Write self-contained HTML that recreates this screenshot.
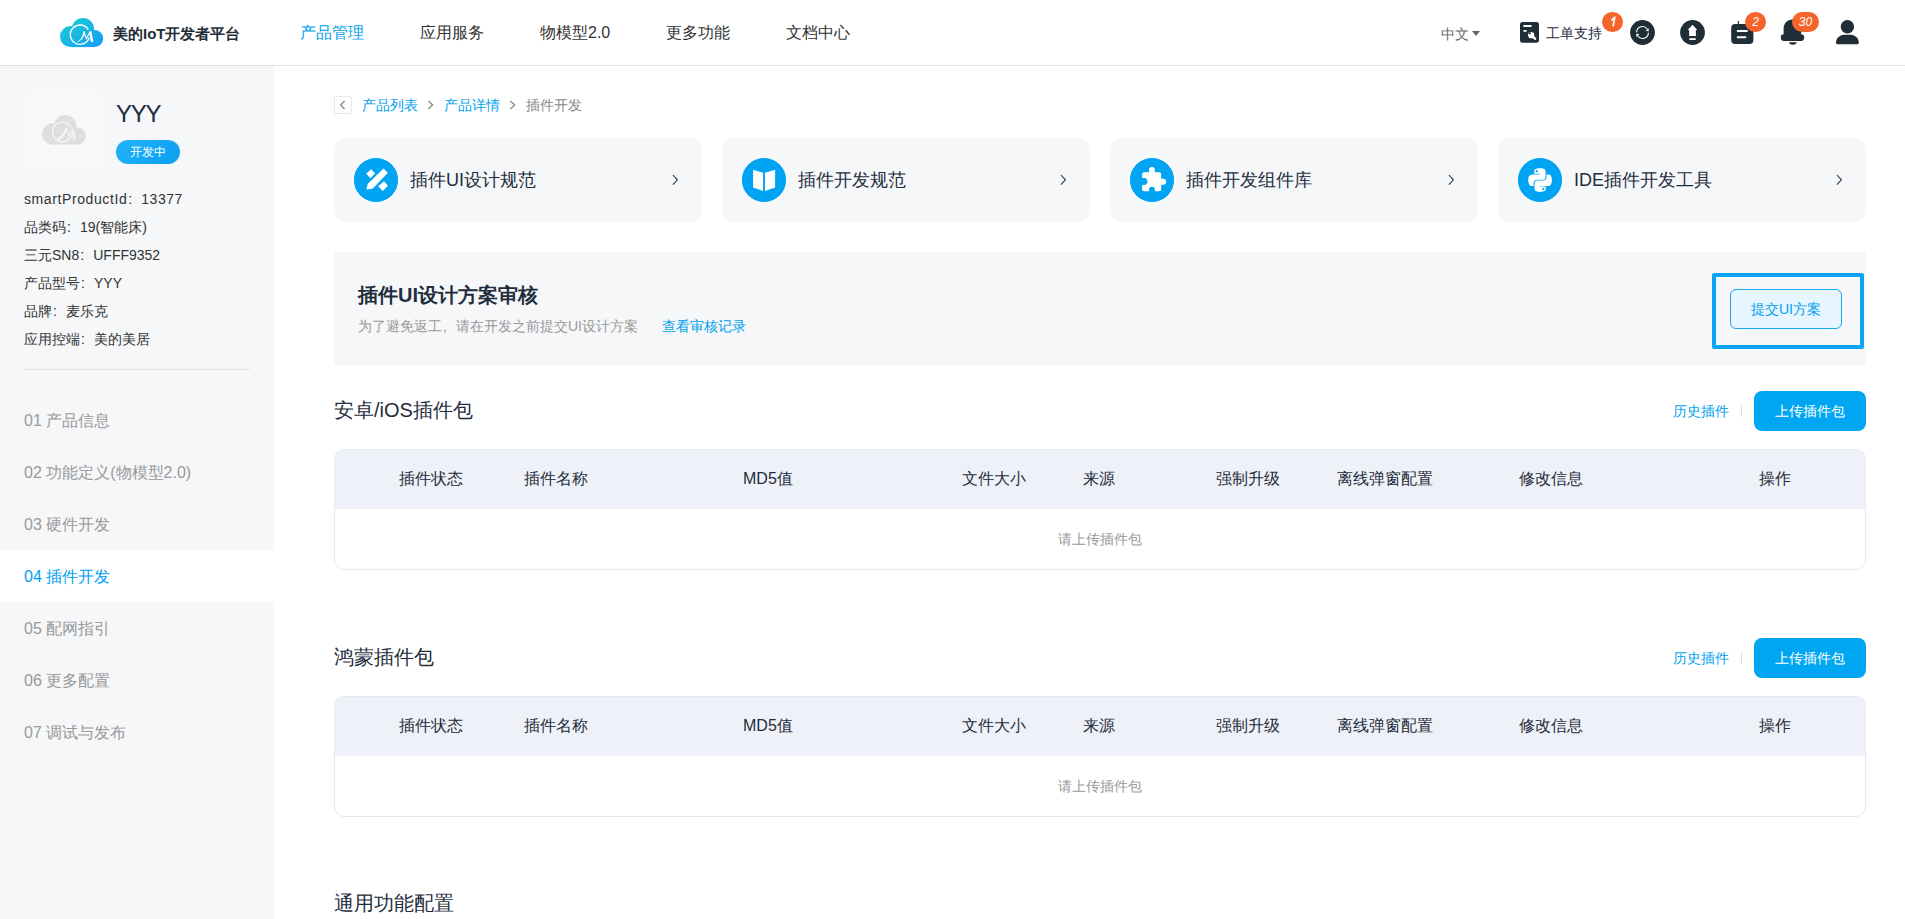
<!DOCTYPE html>
<html><head><meta charset="utf-8">
<style>
*{margin:0;padding:0;box-sizing:border-box}
html,body{width:1905px;height:919px;overflow:hidden;background:#fff;font-family:"Liberation Sans",sans-serif;color:#1f2d3d}
.abs{position:absolute}
.fc{display:inline-block;width:14px;padding-left:1px}
.badge{position:absolute;top:12px;height:20px;border-radius:10px;background:#f5642b;color:#fff;font-size:12px;line-height:20px;text-align:center;font-style:italic}
#hdr{position:absolute;left:0;top:0;width:1905px;height:66px;background:#fff;border-bottom:1px solid #dfe1e6}
.nav{position:absolute;top:22px;font-size:16px;line-height:22px;color:#333;white-space:nowrap}
#side{position:absolute;left:0;top:66px;width:274px;height:853px;background:#f5f7f9}
.info{position:absolute;left:24px;font-size:14px;line-height:20px;color:#333;white-space:nowrap}
.menu{position:absolute;left:0;width:274px;height:52px;font-size:16px;line-height:54px;padding-left:24px;color:#999;white-space:nowrap}
.menu.act{background:#fff;color:#00a1ee}
.card{position:absolute;top:138px;width:368px;height:84px;background:#f5f7f9;border-radius:10px}
.card .ic{position:absolute;left:20px;top:20px;width:44px;height:44px;border-radius:50%;background:#00a6f2}
.card .tx{position:absolute;left:76px;top:30px;font-size:18px;line-height:24px;color:#1f2d3d;white-space:nowrap}
.card .chev{position:absolute;right:22px;top:35px;width:14px;height:14px}
.sec-title{position:absolute;left:334px;font-size:20px;line-height:26px;color:#1f2d3d;white-space:nowrap}
.link{position:absolute;font-size:14px;line-height:18px;color:#00a1ee;white-space:nowrap}
.btn{position:absolute;width:112px;height:40px;border-radius:8px;background:#00a6f2;color:#fff;font-size:14px;line-height:40px;text-align:center}
.tbl{position:absolute;left:334px;width:1532px;height:121px;border:1px solid #e6e9f0;border-radius:10px;overflow:hidden;background:#fff}
.tbl .th{position:absolute;left:0;top:0;width:100%;height:59px;background:#eef1f7}
.tbl .h{position:absolute;top:18px;font-size:16px;line-height:22px;color:#1f2d3d;white-space:nowrap}
.tbl .empty{position:absolute;left:0;width:100%;top:80px;text-align:center;font-size:14px;line-height:18px;color:#999}
</style></head><body>
<div id="hdr">
  <svg class="abs" style="left:60px;top:18px" width="43.5" height="29.5" viewBox="0 0 43.5 29.5">
    <defs><linearGradient id="lg1" gradientUnits="userSpaceOnUse" x1="10" y1="0" x2="30" y2="29"><stop offset="0" stop-color="#19cdd2"/><stop offset="1" stop-color="#14a3f5"/></linearGradient></defs>
    <g fill="url(#lg1)"><circle cx="10.5" cy="18.6" r="10.5"/><circle cx="22.9" cy="11.2" r="11.2"/><circle cx="34.7" cy="20.6" r="8.5"/><rect x="10.5" y="15" width="24.2" height="14.1"/></g>
    <path d="M28.3 11.6 A9.7 9.7 0 1 0 29.3 19.5" fill="none" stroke="#fff" stroke-width="1.4"/>
    <path d="M16.4 24.2 C20.5 22.8 22.8 18 23.6 13.6 L25.2 13.6 C24.6 18.5 21.5 23.6 16.4 24.2 Z" fill="#fff"/>
    <path d="M23.9 13.6 L26.4 20.6 L30.2 13.6" fill="none" stroke="#fff" stroke-width="1.1"/>
    <path d="M30.2 13.6 L32.2 24" fill="none" stroke="#fff" stroke-width="2.4"/>
  </svg>
  <div class="abs" style="left:113px;top:24px;font-size:15px;line-height:20px;font-weight:bold;color:#1f2d37">美的IoT开发者平台</div>
  <div class="nav" style="left:300px;color:#00a1ee">产品管理</div>
  <div class="nav" style="left:420px">应用服务</div>
  <div class="nav" style="left:540px">物模型2.0</div>
  <div class="nav" style="left:666px">更多功能</div>
  <div class="nav" style="left:786px">文档中心</div>
  <div class="abs" style="left:1441px;top:25px;font-size:14px;line-height:18px;color:#666">中文</div>
  <div class="abs" style="left:1472px;top:31px;width:0;height:0;border-left:4px solid transparent;border-right:4px solid transparent;border-top:5px solid #666"></div>
  <svg class="abs" style="left:1519px;top:21px" width="21" height="23" viewBox="0 0 21 23">
    <rect x="1" y="1" width="19" height="20.7" rx="2.6" fill="#1f2d37"/>
    <rect x="4.3" y="4.1" width="8.4" height="1.8" rx=".6" fill="#fff"/>
    <rect x="4.4" y="9.1" width="3.3" height="1.6" rx=".5" fill="#fff"/>
    <circle cx="12.2" cy="14.2" r="3.1" fill="#fff"/><line x1="12.2" y1="14.2" x2="16" y2="17.6" stroke="#fff" stroke-width="2.6" stroke-linecap="round"/><circle cx="10.9" cy="12.3" r="1" fill="#1f2d37"/>
  </svg>
  <div class="abs" style="left:1546px;top:24px;font-size:14px;line-height:18px;color:#1f2d3d">工单支持</div>
  <div class="badge" style="left:1602px;width:21px"><svg width="21" height="20" viewBox="0 0 21 20" style="display:block"><path d="M9.3 8.4 L12.9 5.2 L11 14.3" fill="none" stroke="#fff" stroke-width="1.7" stroke-linejoin="round"/></svg></div>
  <svg class="abs" style="left:1630px;top:20px" width="25" height="25" viewBox="0 0 25 25">
    <circle cx="12.5" cy="12.5" r="12.4" fill="#1f2d37"/>
    <path d="M6.6 12.3 A5.9 5.9 0 0 1 17.4 9.2" fill="none" stroke="#fff" stroke-width="1.15"/>
    <path d="M18.6 8.0 L18.8 11.3 L15.6 10.9 Z" fill="#fff"/>
    <path d="M18.4 12.7 A5.9 5.9 0 0 1 7.6 15.8" fill="none" stroke="#fff" stroke-width="1.15"/>
    <path d="M6.4 17.0 L6.2 13.7 L9.4 14.1 Z" fill="#fff"/>
  </svg>
  <svg class="abs" style="left:1680px;top:20px" width="25" height="25" viewBox="0 0 25 25">
    <circle cx="12.5" cy="12.5" r="12.4" fill="#1f2d37"/>
    <path d="M12.5 4.8 L17.3 10.1 L15.9 10.1 L15.9 16.0 L9.1 16.0 L9.1 10.1 L7.7 10.1 Z" fill="#fff"/>
    <rect x="9.3" y="18.2" width="6.4" height="1.8" fill="#fff"/>
  </svg>
  <svg class="abs" style="left:1730px;top:20px" width="25" height="25" viewBox="0 0 25 25">
    <rect x="1.2" y="3.9" width="22.2" height="20" rx="4" fill="#1f2d37"/>
    <rect x="7.8" y="1" width="1.2" height="3.5" fill="#1f2d37"/>
    <rect x="6.9" y="10" width="10.8" height="2" rx=".5" fill="#fff"/>
    <rect x="6.9" y="16.2" width="9.4" height="2.1" rx=".5" fill="#fff"/>
  </svg>
  <div class="badge" style="left:1745px;width:21px">2</div>
  <svg class="abs" style="left:1780px;top:19px" width="25" height="27" viewBox="0 0 25 27">
    <path d="M12.4 0.6 C7.5 0.6 3.6 4.5 3.6 9.6 L3.6 15.6 L2.6 15.6 C1.4 15.6 0.8 16.6 0.8 18.6 C0.8 20.6 1.6 21.9 3.4 21.9 L21.6 21.9 C23.4 21.9 24.2 20.6 24.2 18.6 C24.2 16.6 23.4 15.6 22.2 15.6 L21.2 15.6 L21.2 9.6 C21.2 4.5 17.3 0.6 12.4 0.6 Z" fill="#1f2d37"/>
    <path d="M8.8 23.3 L16.9 23.3 C16.4 25 14.8 25.8 12.85 25.8 C10.9 25.8 9.3 25 8.8 23.3 Z" fill="#1f2d37"/>
  </svg>
  <div class="badge" style="left:1792px;width:27px">30</div>
  <svg class="abs" style="left:1835px;top:19px" width="25" height="27" viewBox="0 0 25 27">
    <circle cx="12.4" cy="7.7" r="6.7" fill="#1f2d37"/>
    <path d="M1 23.8 C1 19.5 4.5 15.8 9 15.8 L15.8 15.8 C20.3 15.8 23.8 19.5 23.8 23.8 C23.8 24.8 23.2 25.2 22.4 25.2 L2.4 25.2 C1.6 25.2 1 24.8 1 23.8 Z" fill="#1f2d37"/>
  </svg>
</div>

<div id="side">
  <div class="abs" style="left:24px;top:24px;width:80px;height:80px;border-radius:10px;background:#f7f8fa"></div>
  <svg class="abs" style="left:42px;top:49px" width="44" height="30" viewBox="0 0 43.5 29.5">
    <g fill="#dedede"><circle cx="10.5" cy="18.6" r="10.5"/><circle cx="22.9" cy="11.2" r="11.2"/><circle cx="34.7" cy="20.6" r="8.5"/><rect x="10.5" y="15" width="24.2" height="14.1"/></g>
    <path d="M28.3 11.6 A9.7 9.7 0 1 0 29.3 19.5" fill="none" stroke="#f5f5f5" stroke-width="1.4"/>
    <path d="M16.2 24 C20 22.5 22.5 18 23.9 13.6" fill="none" stroke="#f5f5f5" stroke-width="2.2" stroke-linecap="round"/>
    <path d="M23.9 13.6 L26.4 20.6 L30.2 13.6" fill="none" stroke="#f5f5f5" stroke-width="1.1"/>
    <path d="M30.2 13.6 L32.2 24" fill="none" stroke="#f5f5f5" stroke-width="2.4"/>
  </svg>
  <div class="abs" style="left:116px;top:34px;font-size:24px;line-height:28px;color:#1f2d3d;letter-spacing:-1.2px">YYY</div>
  <div class="abs" style="left:116px;top:74px;width:64px;height:24px;border-radius:12px;background:linear-gradient(135deg,#22b4f8,#0a9ef0);color:#fff;font-size:12px;line-height:24px;text-align:center">开发中</div>
  <div class="info" style="top:123px"><span style="letter-spacing:0.6px">smartProductId</span><span class="fc">:</span><span style="letter-spacing:0.5px">13377</span></div>
  <div class="info" style="top:151px">品类码<span class="fc">:</span>19(智能床)</div>
  <div class="info" style="top:179px">三元SN8<span class="fc">:</span>UFFF9352</div>
  <div class="info" style="top:207px">产品型号<span class="fc">:</span>YYY</div>
  <div class="info" style="top:235px">品牌<span class="fc">:</span>麦乐克</div>
  <div class="info" style="top:263px">应用控端<span class="fc">:</span>美的美居</div>
  <div class="abs" style="left:24px;top:303px;width:226px;height:1px;background:#e1e3e8"></div>
  <div class="menu" style="top:328px">01 产品信息</div>
  <div class="menu" style="top:380px">02 功能定义(物模型2.0)</div>
  <div class="menu" style="top:432px">03 硬件开发</div>
  <div class="menu act" style="top:484px">04 插件开发</div>
  <div class="menu" style="top:536px">05 配网指引</div>
  <div class="menu" style="top:588px">06 更多配置</div>
  <div class="menu" style="top:640px">07 调试与发布</div>
</div>

<!-- breadcrumb -->
<div class="abs" style="left:334px;top:96px;width:18px;height:18px;border:1px solid #e6e8ec;border-radius:2px;background:#fff"></div>
<svg class="abs" style="left:334px;top:96px" width="17" height="17" viewBox="0 0 17 17"><path d="M10.6 5 L6.6 9 L10.6 13" fill="none" stroke="#888" stroke-width="1.3"/></svg>
<svg class="abs" style="left:426px;top:96px" width="10" height="17" viewBox="0 0 10 17"><path d="M2.4 5 L6.6 9 L2.4 13" fill="none" stroke="#888" stroke-width="1.3"/></svg>
<svg class="abs" style="left:508px;top:96px" width="10" height="17" viewBox="0 0 10 17"><path d="M2.4 5 L6.6 9 L2.4 13" fill="none" stroke="#888" stroke-width="1.3"/></svg>
<div class="link" style="left:362px;top:96px;font-size:14px">产品列表</div>
<div class="link" style="left:444px;top:96px;font-size:14px">产品详情</div>
<div class="abs" style="left:526px;top:96px;font-size:14px;line-height:18px;color:#888">插件开发</div>

<div class="card" style="left:334px"><svg class="ic" viewBox="0 0 44 44"><circle cx="22" cy="22" r="22" fill="#00a4f2"/><path d="M29.6 11.3 L33.1 14.8 L18.6 29.9 L13.1 30.9 L14.3 26.1 Z" fill="#fff" stroke="#fff" stroke-width="1.2" stroke-linejoin="round"/><path d="M17.05 11.2 L21.1 15.25 L16.5 20.15 L12.15 15.8 Z" fill="#fff"/><path d="M30.1 23.15 L33.9 27.8 L28.75 32.9 L24.1 28.3 Z" fill="#fff"/></svg><div class="tx">插件UI设计规范</div><svg class="chev" viewBox="0 0 14 14"><path d="M6.9 2 L11.4 6.8 L6.9 11.6" fill="none" stroke="#1f2d3d" stroke-width="1.05"/></svg></div>
<div class="card" style="left:722px"><svg class="ic" viewBox="0 0 44 44"><circle cx="22" cy="22" r="22" fill="#00a4f2"/><path d="M11.1 11.7 L21.1 14.7 L21.1 32.9 L11.1 29.4 Z" fill="#fff"/><path d="M23 14.7 L33.1 11.7 L33.1 29.4 L23 32.9 Z" fill="#fff"/></svg><div class="tx">插件开发规范</div><svg class="chev" viewBox="0 0 14 14"><path d="M6.9 2 L11.4 6.8 L6.9 11.6" fill="none" stroke="#1f2d3d" stroke-width="1.05"/></svg></div>
<div class="card" style="left:1110px"><svg class="ic" viewBox="0 0 44 44"><circle cx="22" cy="22" r="22" fill="#00a4f2"/><path d="M14.1 14.2 L19 14.2 L19 12 A2.95 2.95 0 0 1 24.9 12 L24.9 14.2 L29.2 14.2 A2 2 0 0 1 31.2 16.2 L31.2 20.7 L33.2 20.7 A3 3 0 0 1 33.2 26.7 L31.2 26.7 L31.2 31.2 A2 2 0 0 1 29.2 33.2 L24.9 33.2 L24.9 31.7 A2.95 2.95 0 0 0 19 31.7 L19 33.2 L14.1 33.2 A2 2 0 0 1 12.1 31.2 L12.1 26.9 L14 26.9 A3.4 3.4 0 0 0 14 20.1 L12.1 20.1 L12.1 16.2 A2 2 0 0 1 14.1 14.2 Z" fill="#fff"/></svg><div class="tx">插件开发组件库</div><svg class="chev" viewBox="0 0 14 14"><path d="M6.9 2 L11.4 6.8 L6.9 11.6" fill="none" stroke="#1f2d3d" stroke-width="1.05"/></svg></div>
<div class="card" style="left:1498px"><svg class="ic" viewBox="0 0 44 44"><circle cx="22" cy="22" r="22" fill="#00a4f2"/><g transform="translate(10.2 8.66) scale(0.0529)"><path fill="#fff" d="M439.8 200.5c-7.7-30.9-22.3-54.2-53.4-54.2h-40.1v47.4c0 36.8-31.2 67.8-66.8 67.8H172.7c-29.2 0-53.4 25-53.4 54.3v101.8c0 29 25.2 46 53.4 54.3 33.8 9.9 66.3 11.7 106.8 0 26.9-7.8 53.4-23.5 53.4-54.3v-40.7H226.2v-13.6h160.2c31.1 0 42.6-21.7 53.4-54.2 11.2-33.5 10.7-65.7 0-108.6zM286.2 404c11.1 0 20.1 9.1 20.1 20.3 0 11.3-9 20.4-20.1 20.4-11 0-20.1-9.2-20.1-20.4.1-11.3 9.1-20.3 20.1-20.3zM167.8 248.1h106.8c29.7 0 53.4-24.5 53.4-54.3V91.9c0-29-24.4-50.7-53.4-55.6-35.8-5.9-74.700-5.6-106.8.1-45.2 8-53.4 24.7-53.4 55.6v40.7h106.9v13.6h-147c-31.1 0-58.3 18.7-66.8 54.2-9.8 40.7-10.2 66.1 0 108.6 7.600 31.6 25.7 54.2 56.8 54.2H101v-48.8c0-35.3 30.5-66.4 66.8-66.4zm-6.7-142.6c-11.1 0-20.1-9.1-20.1-20.3.1-11.3 9-20.4 20.1-20.4 11 0 20.1 9.2 20.1 20.4s-9 20.3-20.1 20.3z"/></g></svg><div class="tx">IDE插件开发工具</div><svg class="chev" viewBox="0 0 14 14"><path d="M6.9 2 L11.4 6.8 L6.9 11.6" fill="none" stroke="#1f2d3d" stroke-width="1.05"/></svg></div>

<div class="abs" style="left:334px;top:252px;width:1532px;height:113px;background:#f5f7f9"></div>
<div class="abs" style="left:358px;top:282px;font-size:20px;line-height:26px;font-weight:bold;color:#1f2d3d">插件UI设计方案审核</div>
<div class="abs" style="left:358px;top:317px;font-size:14px;line-height:18px;color:#999">为了避免返工<span class="fc" style="vertical-align:0">,</span>请在开发之前提交UI设计方案</div>
<div class="link" style="left:662px;top:317px">查看审核记录</div>
<div class="abs" style="left:1712px;top:273px;width:152px;height:76px;border:4px solid #0aa6f5;border-radius:2px"></div>
<div class="abs" style="left:1730px;top:289px;width:112px;height:40px;border:1px solid #1aa8f0;border-radius:6px;background:#e6f5fe;color:#00a1ee;font-size:14px;line-height:38px;text-align:center">提交UI方案</div>

<div class="sec-title" style="top:397px">安卓/iOS插件包</div>
<div class="link" style="left:1673px;top:402px">历史插件</div>
<div class="abs" style="left:1741px;top:405px;width:1px;height:12px;background:#ddd"></div>
<div class="btn" style="left:1754px;top:391px">上传插件包</div>
<div class="tbl" style="top:449px"><div class="th">
  <div class="h" style="left:64px">插件状态</div><div class="h" style="left:189px">插件名称</div><div class="h" style="left:408px">MD5值</div><div class="h" style="left:627px">文件大小</div><div class="h" style="left:748px">来源</div><div class="h" style="left:881px">强制升级</div><div class="h" style="left:1002px">离线弹窗配置</div><div class="h" style="left:1184px">修改信息</div><div class="h" style="left:1424px">操作</div>
</div><div class="empty">请上传插件包</div></div>

<div class="sec-title" style="top:644px">鸿蒙插件包</div>
<div class="link" style="left:1673px;top:649px">历史插件</div>
<div class="abs" style="left:1741px;top:652px;width:1px;height:12px;background:#ddd"></div>
<div class="btn" style="left:1754px;top:638px">上传插件包</div>
<div class="tbl" style="top:696px"><div class="th">
  <div class="h" style="left:64px">插件状态</div><div class="h" style="left:189px">插件名称</div><div class="h" style="left:408px">MD5值</div><div class="h" style="left:627px">文件大小</div><div class="h" style="left:748px">来源</div><div class="h" style="left:881px">强制升级</div><div class="h" style="left:1002px">离线弹窗配置</div><div class="h" style="left:1184px">修改信息</div><div class="h" style="left:1424px">操作</div>
</div><div class="empty">请上传插件包</div></div>

<div class="sec-title" style="top:890px">通用功能配置</div>
</body></html>
